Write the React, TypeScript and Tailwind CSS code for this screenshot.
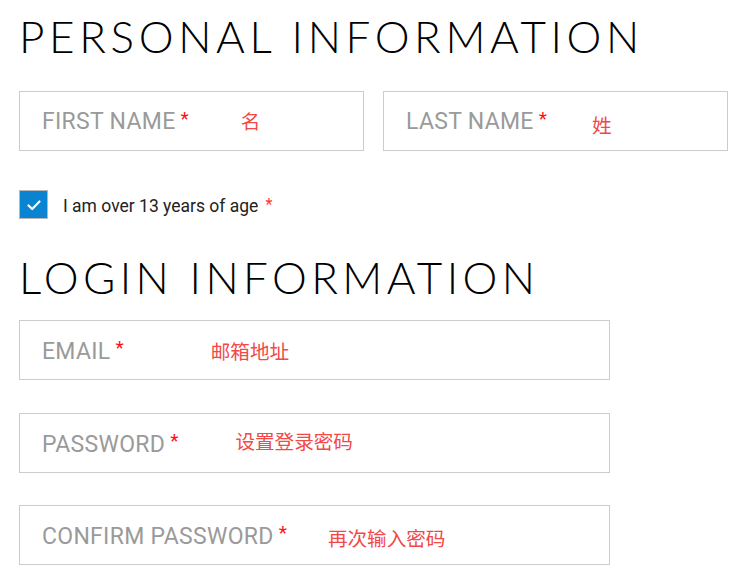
import React from "react";

const Field = ({ label, hint, hintOffset, className }: { label: string; hint: string; hintOffset: string; className?: string }) => (
  <div className={`h-[60px] border border-[#cccccc] bg-white flex items-center pl-[22px] ${className ?? ""}`}>
    <span className="text-[23px] text-[#9a9a9a] tracking-[0.3px] mt-[3px]" style={{ fontFamily: "Roboto, sans-serif" }}>
      {label}
    </span>
    <span className="text-[19px] leading-none text-[#ff1010] ml-[5px] -mt-[6px]" style={{ fontFamily: "Roboto, sans-serif" }}>*</span>
    <span
      className={`text-[19.6px] text-[#f24848] ${hintOffset}`}
      style={{ fontFamily: '"Noto Sans CJK SC", sans-serif' }}
    >
      {hint}
    </span>
  </div>
);

export default function App() {
  return (
    <div className="w-[746px] h-[573px] bg-white overflow-hidden pl-[19px] pr-[18px]">
      <h1
        className="text-[44px] leading-[44px] font-light tracking-[0.105em] text-black pt-[14px] whitespace-nowrap"
        style={{ fontFamily: "Lato, sans-serif" }}
      >
        PERSONAL INFORMATION
      </h1>
      <div className="flex gap-[19px] mt-[33px]">
        <Field label="FIRST NAME" hint="名" hintOffset="ml-[52px]" className="w-[345px]" />
        <Field label="LAST NAME" hint="姓" hintOffset="ml-[45px] mt-[8px]" className="w-[345px]" />
      </div>
      <div className="flex items-center mt-[39px]">
        <div className="w-[29px] h-[29px] bg-[#0a84d0] border border-[#b8b8b8] flex items-center justify-center">
          <svg width="16" height="16" viewBox="0 0 16 16" fill="none">
            <path d="M2.5 8.5 L6.2 12 L13.5 4.5" stroke="white" strokeWidth="2.2" strokeLinecap="round" strokeLinejoin="round" />
          </svg>
        </div>
        <span className="ml-[15px] text-[17.5px] text-[#222] mt-[3px]" style={{ fontFamily: "Roboto, sans-serif" }}>
          I am over 13 years of age
        </span>
        <span className="ml-[7px] text-[16px] text-[#ff3030]" style={{ fontFamily: "Roboto, sans-serif" }}>*</span>
      </div>
      <h1
        className="text-[44px] leading-[44px] font-light tracking-[0.1em] text-black mt-[36px] whitespace-nowrap"
        style={{ fontFamily: "Lato, sans-serif" }}
      >
        LOGIN INFORMATION
      </h1>
      <div className="w-[591px] flex flex-col mt-[21px]">
        <Field label="EMAIL" hint="邮箱地址" hintOffset="ml-[87px]" />
        <Field label="PASSWORD" hint="设置登录密码" hintOffset="ml-[57px] -mt-[6px]" className="mt-[33px]" />
        <Field label="CONFIRM PASSWORD" hint="再次输入密码" hintOffset="ml-[41px] mt-[4px]" className="mt-[32px]" />
      </div>
    </div>
  );
}
